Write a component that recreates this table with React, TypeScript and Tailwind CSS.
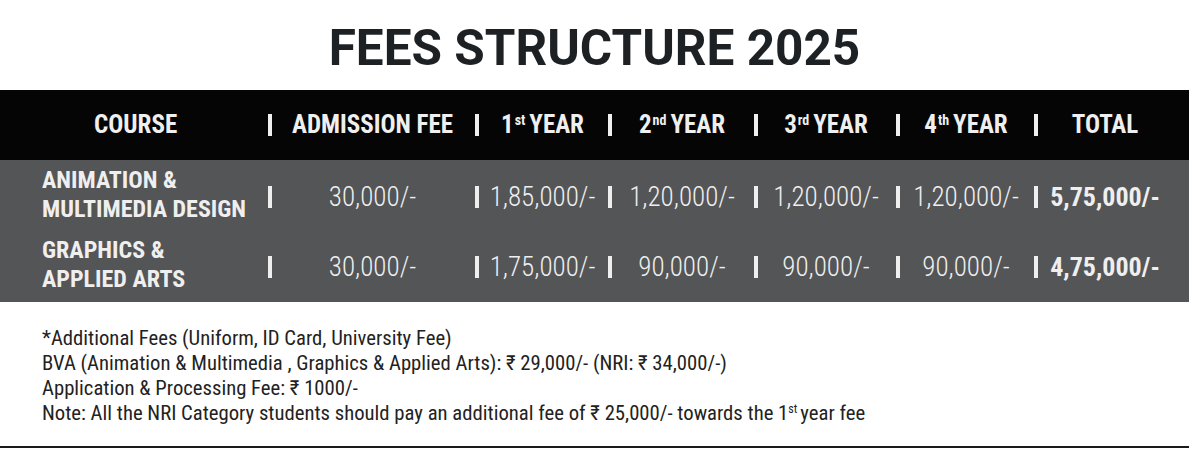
const cond = { fontFamily: '"Roboto Condensed", Roboto, "Liberation Sans Narrow", sans-serif' }

type Row = { course: string[]; values: string[]; total: string }

const rows: Row[] = [
  {
    course: ['ANIMATION &', 'MULTIMEDIA DESIGN'],
    values: ['30,000/-', '1,85,000/-', '1,20,000/-', '1,20,000/-', '1,20,000/-'],
    total: '5,75,000/-',
  },
  {
    course: ['GRAPHICS &', 'APPLIED ARTS'],
    values: ['30,000/-', '1,75,000/-', '90,000/-', '90,000/-', '90,000/-'],
    total: '4,75,000/-',
  },
]

const grid = 'grid grid-cols-[266px_207px_133px_146px_142px_138px_138px_1fr] items-center'

function Cell({ children }: { children: React.ReactNode }) {
  return (
    <div className="flex items-center">
      <div className="w-[4px] h-[22px] ml-[2px] bg-[#efefef] shrink-0" />
      <div className="flex-1 text-center">{children}</div>
    </div>
  )
}

function Ord({ n, sup }: { n: string; sup: string }) {
  return (
    <span>
      {n}
      <sup className="text-[14px] -top-[8px] ml-[1px] mr-[4px]">{sup}</sup>
      YEAR
    </span>
  )
}

export default function App() {
  return (
    <div className="w-[1189px] h-[450px] bg-white overflow-hidden" style={cond}>
      <h1
        className="h-[90px] flex items-center justify-center pt-[6px] text-[49.5px] font-bold text-[#1d2124]"
        style={{ fontFamily: 'Roboto, "Liberation Sans", sans-serif' }}
      >
        FEES STRUCTURE 2025
      </h1>

      <div className={`${grid} h-[70px] bg-[#050505] text-[#efefef] text-[25px] font-bold`}>
        <div className="pl-[94px] pb-[1px]">COURSE</div>
        <Cell>ADMISSION FEE</Cell>
        <Cell><Ord n="1" sup="st" /></Cell>
        <Cell><Ord n="2" sup="nd" /></Cell>
        <Cell><Ord n="3" sup="rd" /></Cell>
        <Cell><Ord n="4" sup="th" /></Cell>
        <div className="col-span-2 flex items-center">
          <div className="w-[4px] h-[22px] ml-[2px] bg-[#efefef]" />
          <div className="w-[134px] text-center">TOTAL</div>
        </div>
      </div>

      <div className="bg-[#545557] text-[#efefef] pt-[2px]">
        {rows.map((r, i) => (
          <div key={i} className={`${grid} h-[70px]`}>
            <div className="pl-[42px] pb-[4px] text-[24px] font-bold leading-[29px]">
              {r.course.map((c) => (
                <div key={c}>{c}</div>
              ))}
            </div>
            {r.values.map((v, j) => (
              <Cell key={j}>
                <span className="text-[27px] font-light">{v}</span>
              </Cell>
            ))}
            <div className="col-span-2 flex items-center">
              <div className="w-[4px] h-[22px] ml-[2px] bg-[#efefef]" />
              <div className="w-[134px] text-center text-[26px] font-bold">{r.total}</div>
            </div>
          </div>
        ))}
      </div>

      <div className="h-[146px] border-b-2 border-[#1a1a1a] pl-[42px] pt-[24px] text-[20.7px] leading-[25px] text-[#222]">
        <p>*Additional Fees (Uniform, ID Card, University Fee)</p>
        <p>BVA (Animation &amp; Multimedia , Graphics &amp; Applied Arts): ₹ 29,000/- (NRI: ₹ 34,000/-)</p>
        <p>Application &amp; Processing Fee: ₹ 1000/-</p>
        <p>
          Note: All the NRI Category students should pay an additional fee of ₹ 25,000/- towards the 1
          <sup className="text-[12px] -top-[7px] mr-[3px]">st</sup>year fee
        </p>
      </div>
    </div>
  )
}
